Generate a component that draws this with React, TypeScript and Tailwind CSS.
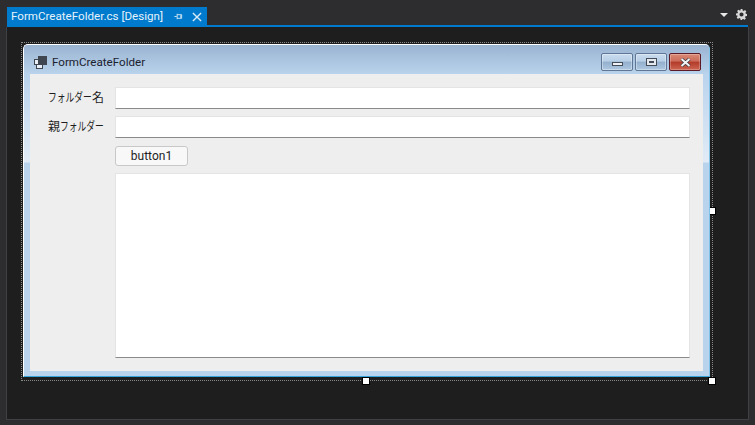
function Kana({ children, w }: { children: string; w: string }) {
  return (
    <span className={`${w} whitespace-nowrap`}>
      <span className="inline-block origin-left scale-x-[0.73]">{children}</span>
    </span>
  );
}

function Field({ className }: { className: string }) {
  return (
    <div className={`bg-white border-t border-x border-b border-t-[#e4e4e4] border-x-[#e4e4e4] border-b-[#8a8a8a] ${className}`} />
  );
}

export default function App() {
  const sans = "font-['Roboto','Noto_Sans_CJK_JP',sans-serif]";
  return (
    <div className={`w-[755px] h-[425px] overflow-hidden bg-[#2d2d30] flex flex-col ${sans}`}>
      {/* tab strip */}
      <div className="h-[27px] flex flex-col shrink-0">
        <div className="h-[26px] pt-[7px] px-[7px] flex items-stretch">
          <div className="w-[200px] h-[19px] bg-[#007acc] flex items-center pl-[4px] text-[11.6px] leading-none text-[#e6f2fb] whitespace-nowrap">
            <span className="w-[163px]">FormCreateFolder.cs [Design]</span>
            <svg width="9" height="9" viewBox="0 0 10 10" fill="none" stroke="#d8ecf8" strokeWidth="1">
              <path d="M0.5 5H3M3.5 2V8M3.5 3H8.5V7H3.5M7.5 3.5V6.5" />
            </svg>
            <svg width="10" height="10" viewBox="0 0 11 11" className="ml-[9px]" fill="none" stroke="#d8ecf8" strokeWidth="1.5">
              <path d="M1 1L10 10M10 1L1 10" />
            </svg>
          </div>
          <div className="flex-1 flex items-center justify-end gap-[8px] pr-[1px] -mt-[5px]">
            <svg width="8" height="4" viewBox="0 0 8 4" fill="#e8e8e8" className="mt-[2px]">
              <path d="M0 0H8L4 4Z" />
            </svg>
            <svg width="11" height="11" viewBox="0 0 24 24" fill="#d8d8d8" fillRule="evenodd">
              <path d="M10 0h4l.6 3.4 2.2.9L19.7 2.4l2.8 2.8-1.9 2.9.9 2.2L24 11v4l-3.4.6-.9 2.2 1.9 2.9-2.8 2.8-2.9-1.9-2.2.9L13 24h-3l-.6-3.4-2.2-.9-2.9 1.9-2.8-2.8 1.9-2.9-.9-2.2L0 14v-4l3.4-.6.9-2.2-1.9-2.9 2.8-2.8 2.9 1.9 2.2-.9zM12 7.5a4.5 4.5 0 1 0 0 9 4.5 4.5 0 0 0 0-9z" />
            </svg>
          </div>
        </div>
        <div className="mx-[7px] h-[2px] -mt-[1px] w-[741px] bg-[#007acc]" />
      </div>

      {/* designer surface */}
      <div className="relative ml-[6px] w-[743px] h-[393px] bg-[#1e1e1e] border-x border-b border-[#3f3f46] pl-[16px] pt-[17px]">
        {/* selection frame */}
        <div className="absolute left-[14px] top-[15px] w-[692px] h-[339px] border border-dotted border-[#8a8a8a]" />
        <div className="absolute left-[701px] top-[180px] w-[6px] h-[6px] bg-white border border-black box-content" />
        <div className="absolute left-[355px] top-[350px] w-[6px] h-[6px] bg-white border border-black box-content" />
        <div className="absolute left-[701px] top-[350px] w-[6px] h-[6px] bg-white border border-black box-content" />

        {/* form window */}
        <div className="relative w-[687px] h-[333px] flex flex-col border-t border-x border-b border-t-white border-l-white border-r-[#7fc4e8] border-b-[#35a4d8] rounded-t-[5px] bg-[#b9d3ed] overflow-hidden">
          <div className="h-[29px] shrink-0 flex items-center bg-gradient-to-b from-[#9ab3d1] to-[#bad3ec] pl-[10px] pr-[8px] pt-[5px]">
            <svg width="13" height="13" viewBox="0 0 13 13">
              <rect x="0.5" y="3.5" width="5" height="5" fill="#e8eef5" stroke="#404650" />
              <rect x="4.5" y="0.5" width="8" height="8" fill="#404650" stroke="#404650" />
              <rect x="2.5" y="8.5" width="6" height="4" fill="#e8eef5" stroke="#404650" />
            </svg>
            <span className="ml-[5px] mt-[2px] text-[11.6px] leading-none text-[#1a2230]">FormCreateFolder</span>
            <div className="ml-auto flex gap-[2px]">
              <div className="w-[32px] h-[18px] rounded-[2px] border border-[#5f7694] flex items-center justify-center bg-[linear-gradient(#c9dcef_0%,#b8cfe6_45%,#93afcd_50%,#afc8e2_100%)] shadow-[inset_0_0_0_1px_rgba(255,255,255,0.35)]">
                <div className="w-[11px] h-[4px] mt-[4px] bg-[#eef2f6] border border-[#444c58]" />
              </div>
              <div className="w-[32px] h-[18px] rounded-[2px] border border-[#5f7694] flex items-center justify-center bg-[linear-gradient(#c9dcef_0%,#b8cfe6_45%,#93afcd_50%,#afc8e2_100%)] shadow-[inset_0_0_0_1px_rgba(255,255,255,0.35)]">
                <div className="w-[11px] h-[8px] bg-[#e4e9ef] border border-[#444c58] flex items-center justify-center">
                  <div className="w-[5px] h-[2px] border border-[#444c58]" />
                </div>
              </div>
              <div className="w-[32px] h-[18px] rounded-[2px] border border-[#5c1a26] flex items-center justify-center bg-[linear-gradient(#d98a78_0%,#cc6a58_45%,#b23a28_50%,#cc6652_100%)] shadow-[inset_0_0_0_1px_rgba(255,255,255,0.25)]">
                <svg width="11" height="9" viewBox="0 0 11 9">
                  <path d="M1.5 1L9.5 8M9.5 1L1.5 8" stroke="#3f3f48" strokeWidth="3.4" />
                  <path d="M1.5 1L9.5 8M9.5 1L1.5 8" stroke="#f2f2f2" strokeWidth="2" />
                </svg>
              </div>
            </div>
          </div>

          <div className="flex-1 flex bg-[linear-gradient(#b9d3ed_0px,#e1ebf6_88px,#b9d3ed_89px)] px-[6px] pb-[5px]">
            {/* client area */}
            <div className="w-[673px] h-[297px] bg-[#eeeeee] grid grid-cols-[74px_575px] gap-x-[11px] pt-[13px] content-start text-[12px] text-[#1e1e1e]">
              <div className="h-[22px] flex items-center justify-end leading-none">
                <Kana w="w-[44px]">フォルダー</Kana>
                <span>名</span>
              </div>
              <Field className="h-[22px]" />
              <div className="h-[22px] mt-[7px] flex items-center justify-end leading-none">
                <span>親</span>
                <Kana w="w-[44px]">フォルダー</Kana>
              </div>
              <Field className="h-[22px] mt-[7px]" />
              <div />
              <div className="h-[20px] mt-[8px] w-[73px] rounded-[3px] border border-[#c8c8c8] bg-[#f8f8f8] flex items-center justify-center leading-none text-[12px]">button1</div>
              <div />
              <Field className="h-[185px] mt-[7px]" />
            </div>
          </div>
        </div>
      </div>
    </div>
  );
}
